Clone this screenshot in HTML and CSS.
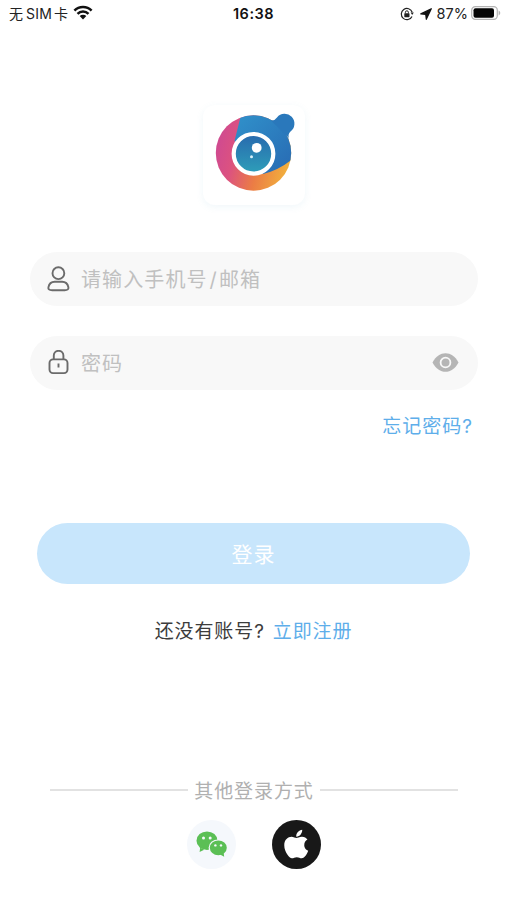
FILE: index.html
```html
<!DOCTYPE html>
<html lang="zh-CN">
<head>
<meta charset="utf-8">
<title>登录</title>
<link rel="stylesheet" href="styles.css">
</head>
<body>
<div class="screen">
  <header class="status">
    <div class="status-left">
      <span class="carrier">无<span class="sim">SIM</span>卡</span>
      <svg class="wifi" width="20" height="15" viewBox="0 0 20 15">
        <path d="M1.400 5.600a12 12 0 0 1 17.200 0M4.500 8.800a7.700 7.700 0 0 1 11 0" fill="none" stroke="#111" stroke-width="2.500"/>
        <path d="M6.700 11a4.700 4.700 0 0 1 6.600 0L10 14.400z" fill="#111"/>
      </svg>
    </div>
    <div class="clock">16:38</div>
    <div class="status-right">
      <svg width="14" height="14" viewBox="0 0 14 14">
        <path d="M12.200 5.200A5.600 5.600 0 1 0 12 9.400" fill="none" stroke="#222" stroke-width="1.200"/>
        <path d="M10.600 5.600h3.200l-1.600 2.500z" fill="#222"/>
        <rect x="4.300" y="6.200" width="5.200" height="4" rx=".6" fill="#222"/>
        <path d="M5.400 6.400V5.300a1.500 1.500 0 0 1 3 0v1.100" fill="none" stroke="#222"/>
      </svg>
      <svg class="arrow" width="12" height="12" viewBox="0 0 12 12"><path d="M11.300.7.8 5.900l4.900.4.600 5z" fill="#111" stroke="#111" stroke-width="1.200" stroke-linejoin="round"/></svg>
      <span class="percent">87%</span>
      <svg class="battery" width="30" height="14" viewBox="0 0 30 14">
        <rect x=".7" y=".7" width="25.600" height="12.600" rx="3.600" fill="#fff" stroke="#b4b4b4" stroke-width="1.200"/>
        <rect x="2.500" y="2.200" width="20.500" height="9.600" rx="2" fill="#050505"/>
        <path d="M27.600 4.600c2.200.8 2.200 4 0 4.800z" fill="#b4b4b4"/>
      </svg>
    </div>
  </header>

  <div class="logo">
    <svg width="102" height="100" viewBox="0 0 102 100">
      <defs>
        <linearGradient id="warm" x1="0" y1="0.4" x2="1" y2="0.65">
          <stop offset="0" stop-color="#cf4a91"/><stop offset=".25" stop-color="#dc5280"/><stop offset=".58" stop-color="#eb7c45"/><stop offset="1" stop-color="#f2b33c"/>
        </linearGradient>
        <linearGradient id="blue" x1="0" y1="0" x2="1" y2="1">
          <stop offset="0" stop-color="#3092cb"/><stop offset="1" stop-color="#2869b2"/>
        </linearGradient>
        <linearGradient id="lens" x1="0" y1="0" x2="0" y2="1">
          <stop offset="0" stop-color="#2869ae"/><stop offset="1" stop-color="#2e9fb9"/>
        </linearGradient>
        <clipPath id="disc"><circle cx="50.500" cy="48" r="37.700"/></clipPath>
      </defs>
      <circle cx="50.500" cy="48" r="37.700" fill="url(#warm)"/>
      <path d="M38.500 8 31.500 36 45 50 60 69Q75 66 91 53V8z" fill="url(#blue)" clip-path="url(#disc)"/>
      <path d="M68 15.500q3.500.5 6-3a9.800 9.800 0 1 1 13.500 14q-3 3-1.500 6.500z" fill="#2a78bb"/>
      <circle cx="50.500" cy="48.800" r="19.800" fill="url(#lens)" stroke="#fff" stroke-width="4.200"/>
      <circle cx="53.700" cy="42.800" r="4.900" fill="#fff"/>
      <circle cx="48.500" cy="51.800" r="1.500" fill="#d9f1fa"/>
    </svg>
  </div>

  <form class="form">
    <label class="field">
      <svg width="24" height="26" viewBox="0 0 24 26" fill="none" stroke="#6b6b6b" stroke-width="1.900">
        <circle cx="11.400" cy="7.200" r="5.900"/>
        <path d="M5.200 24.200C1.900 24.200 1.100 23 1.400 21.300 2.100 17.700 4.400 15.700 7.700 15.700h7.400c3.300 0 5.600 2 6.300 5.600.3 1.700-.5 2.900-3.800 2.900z"/>
      </svg>
      <span class="hint">请输入手机号<span class="slash">/</span>邮箱</span>
    </label>
    <label class="field">
      <svg width="24" height="26" viewBox="0 0 24 26" fill="none" stroke="#6b6b6b" stroke-width="1.900">
        <rect x="2.500" y="9.400" width="18" height="13.700" rx="3.500"/>
        <path d="M6.800 9.200V5.600a4.800 4.800 0 0 1 9.600 0v3.600M11.500 13.500v4"/>
      </svg>
      <span class="hint">密码</span>
      <svg class="eye" width="27" height="20" viewBox="0 0 27 20">
        <path d="M.5 9.500C4 3 8.500.2 13.500.2S23 3 26.500 9.500C23 16 18.500 18.800 13.500 18.800S4 16 .5 9.500z" fill="#b5b5b5"/>
        <circle cx="13.500" cy="9.500" r="4.900" fill="#b5b5b5" stroke="#f8f8f8" stroke-width="1.800"/>
      </svg>
    </label>
    <a class="forgot">忘记密码?</a>
    <div class="submit">登录</div>
  </form>

  <p class="register"><span>还没有账号?</span><a>立即注册</a></p>

  <div class="divider"><span>其他登录方式</span></div>
  <div class="social">
    <svg width="49" height="49" viewBox="0 0 49 49">
      <circle cx="24.500" cy="24.500" r="24.500" fill="#f5f8fc"/>
      <path d="M13.200 27.500 12.600 32l4.600-2.200z" fill="#5bbf55"/>
      <ellipse cx="20" cy="20.700" rx="10.500" ry="9.300" fill="#5bbf55"/>
      <ellipse cx="31.300" cy="27.800" rx="9.700" ry="8.400" fill="#f5f8fc"/>
      <path d="m33 34.500 4.200 2.200-.6-4.200z" fill="#5bbf55"/>
      <ellipse cx="31.300" cy="27.800" rx="8.500" ry="7.400" fill="#5bbf55"/>
      <g fill="#f5f8fc"><circle cx="16.500" cy="18" r="1.500"/><circle cx="23.200" cy="18" r="1.500"/><circle cx="28.400" cy="25.400" r="1.200"/><circle cx="34" cy="25.400" r="1.200"/></g>
    </svg>
    <svg width="49" height="49" viewBox="0 0 49 49">
      <circle cx="24.500" cy="24.500" r="24.500" fill="#181818"/>
      <path transform="translate(12 7.800) scale(.0636)" fill="#fff" d="M318.700 268.700c-.2-36.700 16.400-64.400 50-84.800-18.800-26.900-47.200-41.700-84.700-44.600-35.500-2.800-74.300 20.700-88.500 20.700-15 0-49.400-19.700-76.400-19.700C63.300 141.200 4 184.800 4 273.500q0 39.300 14.400 81.200c12.800 36.700 59 126.700 107.200 125.200 25.200-.6 43-17.900 75.800-17.900 31.800 0 48.300 17.900 76.400 17.900 48.600-.7 90.400-82.500 102.600-119.300-65.200-30.700-61.700-90-61.700-91.900zm-56.600-164.200c27.300-32.400 24.800-61.900 24-72.500-24.100 1.400-52 16.400-67.900 34.900-17.500 19.800-27.800 44.300-25.600 71.900 26.100 2 49.900-11.400 69.500-34.300z"/>
    </svg>
  </div>
</div>
</body>
</html>
```
FILE: styles.css
```css
* { box-sizing: border-box; }
body {
  margin: 0;
  background: #fff;
  font-family: Inter, "Noto Sans CJK SC", sans-serif;
}
svg { display: block; flex: none; }
.screen {
  display: flex;
  flex-direction: column;
  width: 507px;
  height: 900px;
  overflow: hidden;
}
.status {
  display: grid;
  grid-template-columns: 1fr auto 1fr;
  align-items: center;
  height: 27px;
  padding: 0 6px 0 9px;
  font-size: 14px;
  line-height: 20px;
  color: #222;
}
.status-left, .status-right { display: flex; align-items: center; }
.status-right { justify-content: flex-end; }
.sim { margin: 0 2px 0 3px; letter-spacing: .2px; }
.wifi { margin: -3px 0 0 5px; }
.clock { margin: 0 3px 0 0; font-size: 14.500px; font-weight: 600; letter-spacing: .5px; color: #111; }
.arrow { margin: 0 5px 0 6px; }
.percent { font-size: 14.500px; }
.battery { margin: -1px 0 0 3px; }
.logo {
  width: 102px;
  height: 100px;
  margin: 78px 0 0 203px;
  border-radius: 12px;
  box-shadow: 0 2px 7px rgba(110, 175, 205, .1);
}
.form { display: flex; flex-direction: column; margin: 47px 29px 0 30px; }
.field {
  display: flex;
  align-items: center;
  height: 54px;
  margin-bottom: 30px;
  padding: 0 19px 0 17px;
  border-radius: 27px;
  background: #f8f8f8;
}
.hint {
  margin: 2px 0 0 10px;
  font-size: 20px;
  line-height: 30px;
  letter-spacing: 1.100px;
  color: #c0c0c0;
}
.slash { margin: 0 1px 0 2px; }
.eye { margin-left: auto; }
.forgot {
  align-self: flex-end;
  margin: -8px 5px 0 0;
  font-size: 19px;
  line-height: 30px;
  letter-spacing: 1px;
  color: #5eaeea;
}
.submit {
  height: 61px;
  margin: 81px 8px 0 7px;
  border-radius: 31px;
  background: #c8e6fc;
  color: #fff;
  font-size: 21px;
  line-height: 63px;
  letter-spacing: 1px;
  text-align: center;
}
.register {
  display: flex;
  justify-content: center;
  gap: 8px;
  margin: 33px 0 0;
  font-size: 19px;
  line-height: 30px;
  letter-spacing: .9px;
  color: #3c3c3c;
}
.register a { color: #5eaeea; }
.divider {
  display: flex;
  align-items: center;
  gap: 6px;
  margin: 128px 49px 0 50px;
  font-size: 19px;
  line-height: 30px;
  letter-spacing: .9px;
  color: #b0b0b0;
}
.divider span { padding-top: 2px; margin-bottom: -2px; }
.divider::before, .divider::after { content: ""; flex: 1; height: 2px; background: #e2e2e2; }
.social { display: flex; gap: 36px; margin: 15px 0 0 187px; }
```
